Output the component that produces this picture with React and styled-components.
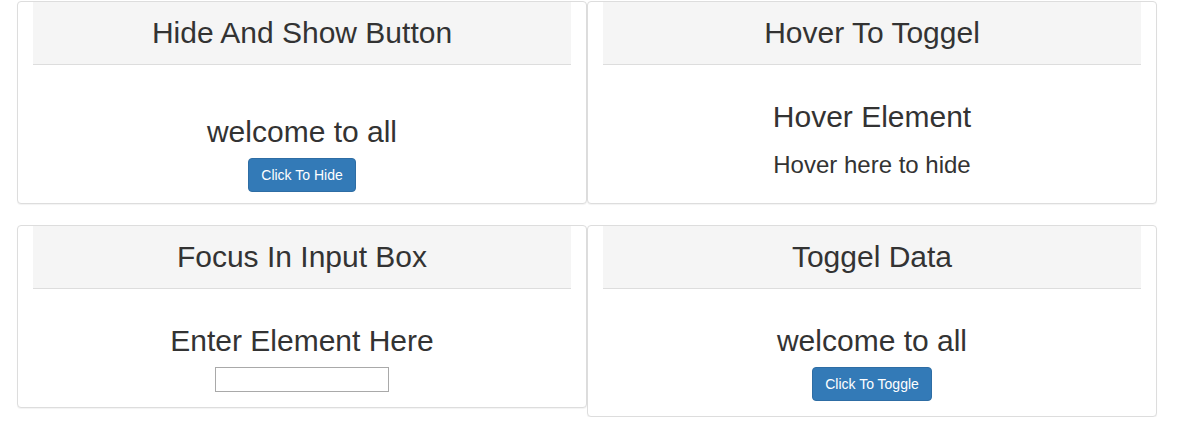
import React from 'react'
import styled, { createGlobalStyle } from 'styled-components'

const GlobalStyle = createGlobalStyle`
  body {
    margin: 0;
    background: #fff;
    font-family: "Liberation Sans", Arial, sans-serif;
    color: #333;
  }
`

const Page = styled.div`
  display: grid;
  grid-template-columns: 570px 570px;
  column-gap: 0;
  row-gap: 21px;
  align-items: start;
  padding: 1px 0 0 17px;
`

const Panel = styled.div`
  border: 1px solid #ddd;
  border-radius: 4px;
  background: #fff;
  box-shadow: 0 1px 1px rgba(0, 0, 0, 0.05);
`

const Heading = styled.div`
  margin: 0 15px;
  height: 60px;
  padding-bottom: 2px;
  display: flex;
  align-items: center;
  justify-content: center;
  background: #f5f5f5;
  border-bottom: 1px solid #ddd;
  font-size: 30px;
  line-height: 33px;
`

const Body = styled.div`
  display: flex;
  flex-direction: column;
  align-items: center;
  padding: ${props => props.top}px 15px ${props => props.bottom}px;
`

const Title = styled.div`
  font-size: 30px;
  line-height: 33px;
`

const Note = styled.div`
  margin-top: 19px;
  font-size: 24px;
  line-height: 26px;
`

const Button = styled.button`
  margin-top: 10px;
  padding: 6px 12px;
  border: 1px solid #2e6da4;
  border-radius: 4px;
  background: #337ab7;
  color: #fff;
  font-family: inherit;
  font-size: 14px;
  line-height: 20px;
  cursor: pointer;
`

const Input = styled.input`
  margin-top: 10px;
  width: 174px;
  height: 25px;
  box-sizing: border-box;
  border: 1px solid #a9a9a9;
  padding: 0 2px;
  font-family: inherit;
  font-size: 13px;
`

export default function App() {
  return (
    <>
      <GlobalStyle />
      <Page>
        <Panel>
          <Heading>Hide And Show Button</Heading>
          <Body top={50} bottom={11}>
            <Title>welcome to all</Title>
            <Button>Click To Hide</Button>
          </Body>
        </Panel>
        <Panel>
          <Heading>Hover To Toggel</Heading>
          <Body top={35} bottom={25}>
            <Title>Hover Element</Title>
            <Note>Hover here to hide</Note>
          </Body>
        </Panel>
        <Panel>
          <Heading>Focus In Input Box</Heading>
          <Body top={35} bottom={15}>
            <Title>Enter Element Here</Title>
            <Input type="text" />
          </Body>
        </Panel>
        <Panel>
          <Heading>Toggel Data</Heading>
          <Body top={35} bottom={15}>
            <Title>welcome to all</Title>
            <Button>Click To Toggle</Button>
          </Body>
        </Panel>
      </Page>
    </>
  )
}
